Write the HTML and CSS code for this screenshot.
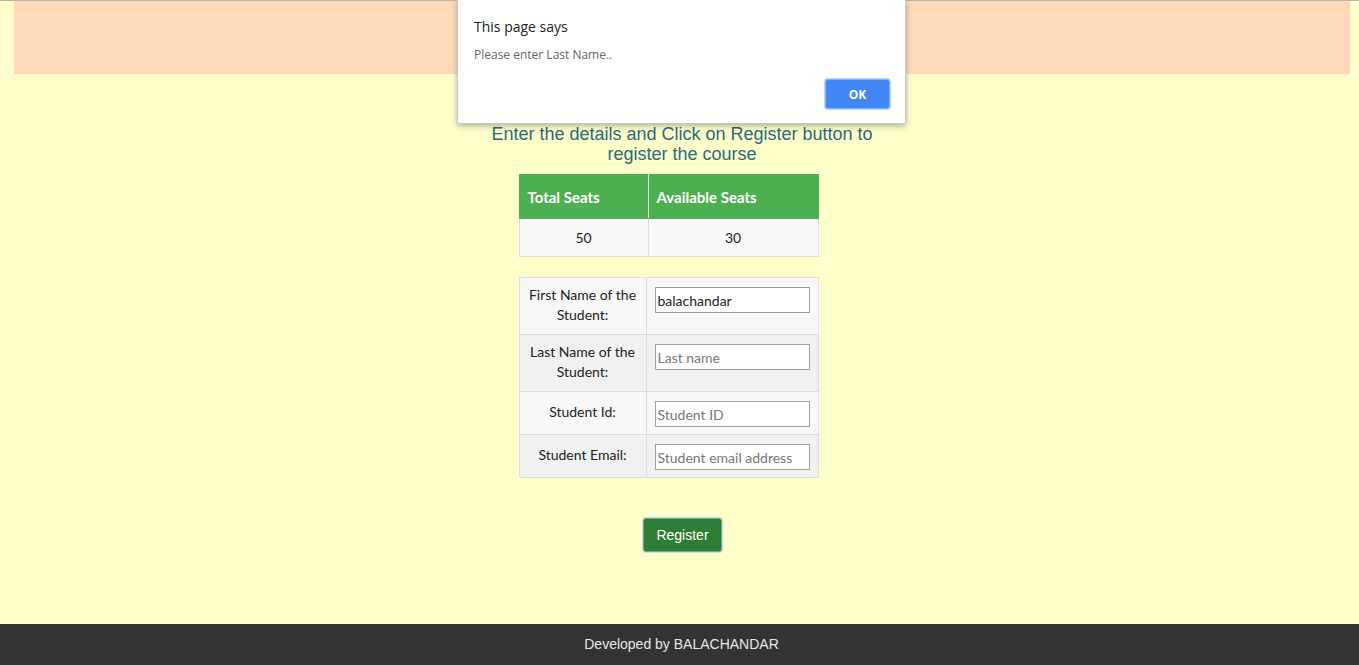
FILE: index.html
```html
<!DOCTYPE html>
<html>
<head>
<meta charset="utf-8">
<title>Course Registration</title>
<link rel="stylesheet" href="styles.css">
</head>
<body>
<div class="page">
  <div class="topline"></div>
  <header class="banner"></header>
  <main class="main">
    <h2 class="intro">Enter the details and Click on Register button to register the course</h2>
    <table class="seats">
      <thead>
        <tr><th>Total Seats</th><th>Available Seats</th></tr>
      </thead>
      <tbody>
        <tr><td>50</td><td>30</td></tr>
      </tbody>
    </table>
    <table class="form">
      <tr class="tall odd">
        <td class="label">First Name of the Student:</td>
        <td class="field"><input class="inp" type="text" value="balachandar"></td>
      </tr>
      <tr class="tall even">
        <td class="label">Last Name of the Student:</td>
        <td class="field"><input class="inp" type="text" placeholder="Last name"></td>
      </tr>
      <tr class="short odd">
        <td class="label">Student Id:</td>
        <td class="field"><input class="inp" type="text" placeholder="Student ID"></td>
      </tr>
      <tr class="short even">
        <td class="label">Student Email:</td>
        <td class="field"><input class="inp" type="text" placeholder="Student email address"></td>
      </tr>
    </table>
    <button class="register" type="button">Register</button>
  </main>
  <footer class="footer">Developed by BALACHANDAR</footer>
</div>
<div class="dialog">
  <div class="dlg-title">This page says</div>
  <div class="dlg-msg">Please enter Last Name..</div>
  <div class="dlg-actions"><button class="dlg-ok" type="button">OK</button></div>
</div>
</body>
</html>
```
FILE: styles.css
```css
html, body {
  margin: 0;
  padding: 0;
  height: 100%;
}
body {
  background: #ffffcc;
  font-family: "Liberation Sans", Arial, sans-serif;
  position: relative;
  overflow: hidden;
}
.page {
  display: flex;
  flex-direction: column;
  height: 665px;
}
.topline {
  height: 1px;
  background: #b4b4b4;
}
.banner {
  height: 73px;
  margin: 0 9px 0 14px;
  background: #ffdab9;
}
.main {
  flex: 1;
  display: flex;
  flex-direction: column;
  align-items: center;
}
.intro {
  width: 420px;
  margin: 50px 0 0 5px;
  font-size: 18px;
  line-height: 20px;
  font-weight: normal;
  color: #2a6b7c;
  text-align: center;
}
.seats, .form {
  border-collapse: collapse;
  width: 300px;
  margin-right: 22px;
  font-family: "Lato", "Open Sans", sans-serif;
  font-size: 13px;
  color: #222;
}
.seats {
  margin-top: 10px;
}
.seats th {
  box-sizing: border-box;
  background: #4caf50;
  color: #fff;
  font-weight: bold;
  font-size: 15px;
  text-align: left;
  height: 44px;
  padding: 0 8px;
  border: 1px solid #4caf50;
  border-right-color: #e3e3e3;
}
.seats th:last-child {
  border-right-color: #4caf50;
}
.seats th:first-child {
  width: 129px;
}
.seats td {
  box-sizing: border-box;
  background: #f8f8f8;
  border: 1px solid #dddddd;
  height: 38px;
  padding: 0;
  text-align: center;
  font-size: 14px;
}
.form {
  margin-top: 20px;
}
.form td {
  box-sizing: border-box;
  border: 1px solid #dddddd;
  padding: 0 8px;
}
.form .odd td { background: #f8f8f8; }
.form .even td { background: #f1f1f1; }
.form .tall td { height: 57px; }
.form .short td { height: 43px; }
.form .label {
  width: 128px;
  text-align: center;
  line-height: 20px;
  font-size: 14px;
  vertical-align: middle;
  padding-bottom: 2px;
}
.form .field {
  vertical-align: top;
  padding-top: 0;
}
.inp {
  display: block;
  margin-top: 9px;
  box-sizing: border-box;
  width: 155px;
  height: 26px;
  border: 1px solid #a0a0a0;
  padding: 0 2px;
  font-family: "Lato", "Open Sans", sans-serif;
  font-size: 14px;
  color: #222;
  background: #fff;
  outline: none;
}
.inp::placeholder {
  color: #777;
}
.register {
  margin-top: 40px;
  margin-left: 6px;
  width: 79px;
  height: 34px;
  background: #2e7d32;
  color: #fff;
  font-family: "Liberation Sans", Arial, sans-serif;
  font-size: 14px;
  border: 1px solid #6c9fb0;
  border-radius: 3px;
  box-shadow: 0 0 0 1px rgba(120,160,190,0.3);
  cursor: pointer;
}
.footer {
  height: 41px;
  background: #333333;
  color: #e6e6e6;
  font-size: 14px;
  display: flex;
  align-items: center;
  justify-content: center;
  box-sizing: border-box;
  padding-left: 8px;
  padding-right: 4px;
  padding-bottom: 2px;
}
.dialog {
  position: absolute;
  left: 457px;
  top: 0;
  width: 449px;
  height: 124px;
  box-sizing: border-box;
  background: #fff;
  border: 1px solid #c8c8c8;
  border-top: none;
  box-shadow: 0 2px 6px rgba(0,0,0,0.3);
  padding: 17px 15px 0 16px;
  font-family: "Open Sans", "Noto Sans", sans-serif;
}
.dlg-title {
  font-size: 14px;
  color: #222;
  line-height: 20px;
}
.dlg-msg {
  margin-top: 10px;
  font-size: 12px;
  color: #666;
  line-height: 16px;
}
.dlg-actions {
  display: flex;
  justify-content: flex-end;
  margin-top: 16px;
}
.dlg-ok {
  width: 65px;
  height: 30px;
  background: #4285f4;
  color: #fff;
  border: 1px solid #8ab4f8;
  border-radius: 3px;
  font-family: "Open Sans", "Noto Sans", sans-serif;
  font-weight: bold;
  font-size: 12px;
  box-shadow: 0 0 0 1px #bcd3fb;
}
```
